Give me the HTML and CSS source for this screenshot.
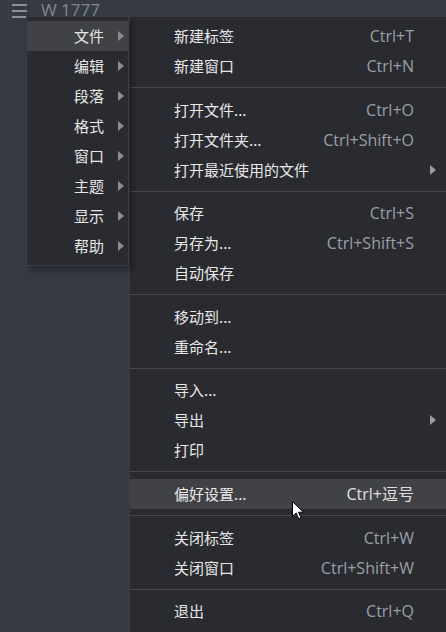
FILE: index.html
```html
<!DOCTYPE html>
<html lang="zh-CN">
<head>
<meta charset="utf-8">
<title>Menu</title>
<link rel="stylesheet" href="styles.css">
</head>
<body>
<header class="topbar">
  <svg class="hamburger" width="15" height="14" viewBox="0 0 15 14"><rect x="0" y="0" width="15" height="2" fill="#8a909a"/><rect x="0" y="6" width="15" height="2" fill="#8a909a"/><rect x="0" y="12" width="15" height="2" fill="#8a909a"/></svg>
  <span class="title">W 1777</span>
</header>

<nav class="menu menu-top">
  <div class="top-item active"><span>文件</span><svg class="arrow" width="6" height="10" viewBox="0 0 6 10"><path d="M0 0 L6 5 L0 10 Z"/></svg></div>
  <div class="top-item"><span>编辑</span><svg class="arrow" width="6" height="10" viewBox="0 0 6 10"><path d="M0 0 L6 5 L0 10 Z"/></svg></div>
  <div class="top-item"><span>段落</span><svg class="arrow" width="6" height="10" viewBox="0 0 6 10"><path d="M0 0 L6 5 L0 10 Z"/></svg></div>
  <div class="top-item"><span>格式</span><svg class="arrow" width="6" height="10" viewBox="0 0 6 10"><path d="M0 0 L6 5 L0 10 Z"/></svg></div>
  <div class="top-item"><span>窗口</span><svg class="arrow" width="6" height="10" viewBox="0 0 6 10"><path d="M0 0 L6 5 L0 10 Z"/></svg></div>
  <div class="top-item"><span>主题</span><svg class="arrow" width="6" height="10" viewBox="0 0 6 10"><path d="M0 0 L6 5 L0 10 Z"/></svg></div>
  <div class="top-item"><span>显示</span><svg class="arrow" width="6" height="10" viewBox="0 0 6 10"><path d="M0 0 L6 5 L0 10 Z"/></svg></div>
  <div class="top-item"><span>帮助</span><svg class="arrow" width="6" height="10" viewBox="0 0 6 10"><path d="M0 0 L6 5 L0 10 Z"/></svg></div>
</nav>

<nav class="menu menu-sub">
  <div class="item"><span class="label">新建标签</span><span class="key">Ctrl+T</span><span class="sub"></span></div>
  <div class="item"><span class="label">新建窗口</span><span class="key">Ctrl+N</span><span class="sub"></span></div>
  <div class="sep"></div>
  <div class="item"><span class="label">打开文件...</span><span class="key">Ctrl+O</span><span class="sub"></span></div>
  <div class="item"><span class="label">打开文件夹...</span><span class="key">Ctrl+Shift+O</span><span class="sub"></span></div>
  <div class="item"><span class="label">打开最近使用的文件</span><span class="key"></span><span class="sub"><svg class="arrow" width="6" height="10" viewBox="0 0 6 10"><path d="M0 0 L6 5 L0 10 Z"/></svg></span></div>
  <div class="sep"></div>
  <div class="item"><span class="label">保存</span><span class="key">Ctrl+S</span><span class="sub"></span></div>
  <div class="item"><span class="label">另存为...</span><span class="key">Ctrl+Shift+S</span><span class="sub"></span></div>
  <div class="item"><span class="label">自动保存</span><span class="key"></span><span class="sub"></span></div>
  <div class="sep"></div>
  <div class="item"><span class="label">移动到...</span><span class="key"></span><span class="sub"></span></div>
  <div class="item"><span class="label">重命名...</span><span class="key"></span><span class="sub"></span></div>
  <div class="sep"></div>
  <div class="item"><span class="label">导入...</span><span class="key"></span><span class="sub"></span></div>
  <div class="item"><span class="label">导出</span><span class="key"></span><span class="sub"><svg class="arrow" width="6" height="10" viewBox="0 0 6 10"><path d="M0 0 L6 5 L0 10 Z"/></svg></span></div>
  <div class="item"><span class="label">打印</span><span class="key"></span><span class="sub"></span></div>
  <div class="sep"></div>
  <div class="item active"><span class="label">偏好设置...</span><span class="key">Ctrl+逗号</span><span class="sub"></span></div>
  <div class="sep"></div>
  <div class="item"><span class="label">关闭标签</span><span class="key">Ctrl+W</span><span class="sub"></span></div>
  <div class="item"><span class="label">关闭窗口</span><span class="key">Ctrl+Shift+W</span><span class="sub"></span></div>
  <div class="sep"></div>
  <div class="item"><span class="label">退出</span><span class="key">Ctrl+Q</span><span class="sub"></span></div>
</nav>

<svg class="cursor" width="13" height="20" viewBox="0 0 13 20"><path d="M0.5 0.5 L0.5 15.5 L4.2 12 L6.8 18 L9 17 L6.5 11.2 L11.5 11.2 Z" fill="#ffffff" stroke="#000000" stroke-width="1" stroke-linejoin="round"/></svg>
</body>
</html>
```

FILE: styles.css
```css
html, body {
  margin: 0;
  padding: 0;
}

body {
  position: relative;
  width: 446px;
  height: 632px;
  overflow: hidden;
  background: #363a43;
  font-family: "Noto Sans CJK SC", "Noto Sans", sans-serif;
  font-size: 15px;
  color: #e8e8e8;
}

.topbar {
  display: flex;
  align-items: flex-start;
  gap: 14px;
  height: 20px;
  padding: 0 12px;
}

.hamburger {
  display: block;
  margin-top: 4px;
}

.title {
  font-family: "Open Sans", sans-serif;
  font-size: 17px;
  line-height: 20px;
  color: #7f8792;
}

.menu {
  position: absolute;
  top: 16px;
  box-sizing: border-box;
  background: #2a2b30;
  border: 1px solid #3b3d43;
  padding: 4px 0;
}

.menu-top {
  left: 26px;
  width: 103px;
  z-index: 2;
  box-shadow: 3px 4px 6px rgba(0, 0, 0, 0.35);
}

.menu-sub {
  left: 129px;
  width: 330px;
  height: 640px;
  z-index: 1;
}

.top-item {
  display: flex;
  align-items: center;
  justify-content: flex-end;
  gap: 14px;
  height: 30px;
  padding-right: 4px;
  line-height: 30px;
}

.top-item.active,
.item.active {
  background: #414246;
}

.arrow {
  display: block;
  fill: #8b8d92;
}

.item {
  display: grid;
  grid-template-columns: 1fr auto 22px;
  align-items: center;
  height: 30px;
  padding: 0 22px 0 44px;
  line-height: 30px;
}

.label {
  white-space: nowrap;
}

.key {
  font-family: "Open Sans", "Noto Sans CJK SC", sans-serif;
  font-size: 16px;
  color: #9a9fa7;
  white-space: nowrap;
}

.item.active .key {
  color: #e0e0e0;
}

.sub {
  display: flex;
  justify-content: flex-end;
}

.sub .arrow {
  fill: #9a9ca0;
}

.sep {
  height: 1px;
  margin: 6px 0 6.6px;
  background: #46484d;
}

.cursor {
  position: absolute;
  left: 292px;
  top: 501px;
  z-index: 5;
}
```
